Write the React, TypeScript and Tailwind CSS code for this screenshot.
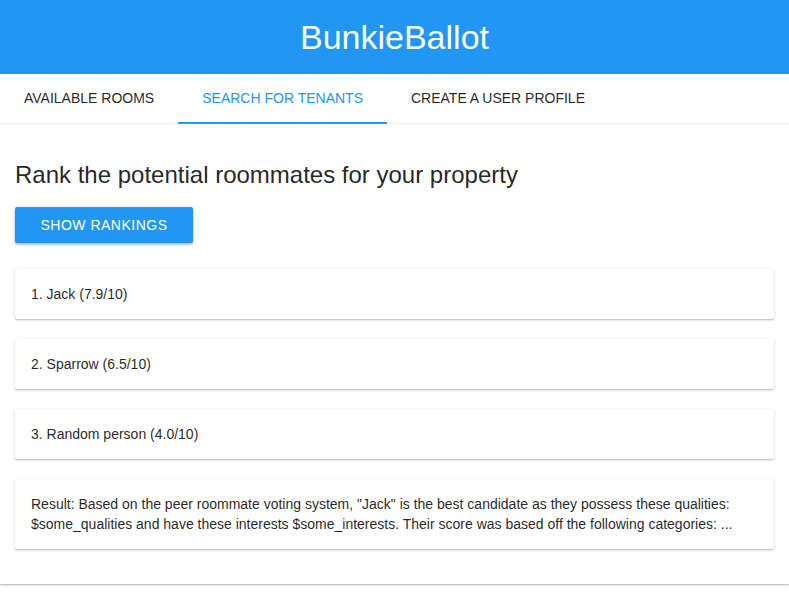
export default function App() {
  const rankings = ["1. Jack (7.9/10)", "2. Sparrow (6.5/10)", "3. Random person (4.0/10)"];

  return (
    <div className="min-h-[602px] bg-white font-['Liberation_Sans',Arial,sans-serif] text-[rgba(0,0,0,0.87)]">
      {/* HEADER */}
      <header className="flex h-[74px] items-center justify-center bg-[#2196f3]">
        <h1 className="text-[34px] leading-none text-white">BunkieBallot</h1>
      </header>

      <div className="shadow-[0_1px_3px_rgba(0,0,0,0.2),0_1px_1px_rgba(0,0,0,0.12)]">
        {/* TABS */}
        <nav className="flex h-[50px] border-b border-[#eeeeee]">
          <div className="flex items-center px-6 text-[14px] text-[rgba(0,0,0,0.87)]">AVAILABLE ROOMS</div>
          <div className="relative flex items-center px-6 text-[14px] text-[#2196f3]">
            SEARCH FOR TENANTS
            <div className="absolute bottom-[-1px] left-0 right-0 h-[2px] bg-[#2196f3]" />
          </div>
          <div className="flex items-center px-6 text-[14px] text-[rgba(0,0,0,0.87)]">CREATE A USER PROFILE</div>
        </nav>

        {/* CONTENT */}
        <main className="px-[15px] pb-[35px] pt-[37px]">
          <h2 className="text-[24px] leading-[28px] text-[rgba(0,0,0,0.87)]">
            Rank the potential roommates for your property
          </h2>

          <button className="mt-[18px] flex h-9 w-[178px] items-center justify-center rounded-[2px] bg-[#2196f3] text-[14px] tracking-[0.5px] text-white shadow-[0_1px_3px_rgba(0,0,0,0.25),0_2px_2px_rgba(0,0,0,0.12)]">
            SHOW RANKINGS
          </button>

          <div className="mt-[26px] flex flex-col gap-5">
            {rankings.map((r) => (
              <div
                key={r}
                className="flex h-[50px] items-center rounded-[2px] bg-white px-4 text-[14px] shadow-[0_1px_3px_rgba(0,0,0,0.2),0_1px_1px_rgba(0,0,0,0.1)]"
              >
                {r}
              </div>
            ))}

            <div className="flex h-[70px] items-center rounded-[2px] bg-white px-4 text-[14px] leading-5 shadow-[0_1px_3px_rgba(0,0,0,0.2),0_1px_1px_rgba(0,0,0,0.1)]">
              <p>
                Result: Based on the peer roommate voting system, "Jack" is the best candidate as they possess these
                qualities: $some_qualities and have these interests $some_interests. Their score was based off the
                following categories: ...
              </p>
            </div>
          </div>
        </main>
      </div>
    </div>
  );
}
